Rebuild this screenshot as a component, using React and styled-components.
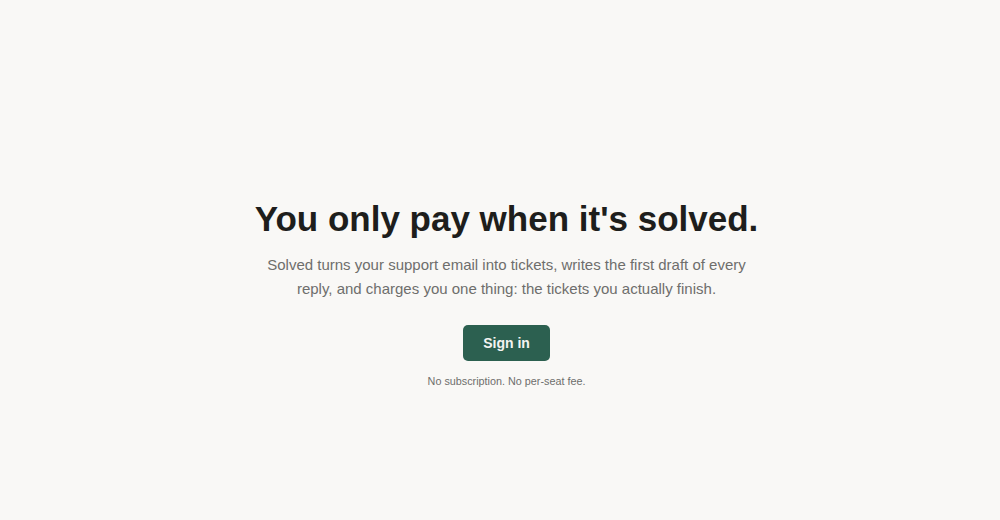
import React from "react";
import styled, { createGlobalStyle } from "styled-components";

const Global = createGlobalStyle`
  html, body { margin: 0; padding: 0; background: #f9f8f6; }
  body { font-family: "Liberation Sans", Arial, sans-serif; }
`;

const Page = styled.main`
  min-height: 520px;
  box-sizing: border-box;
  padding: 198px 0 0 13px;
  display: flex;
  flex-direction: column;
  align-items: center;
  text-align: center;
`;

const Title = styled.h1`
  margin: 0 0 13px;
  font-size: 35px;
  line-height: 42px;
  font-weight: 700;
  color: #1e1e1c;
`;

const Lead = styled.p`
  margin: 0 0 24px;
  max-width: 490px;
  font-size: 15px;
  line-height: 24px;
  color: #6e6e6c;
`;

const Button = styled.button`
  height: 36px;
  padding: 0 20px;
  border: none;
  border-radius: 5px;
  background: #2c6050;
  color: #f4f4f2;
  font-family: inherit;
  font-size: 14px;
  font-weight: 700;
  cursor: pointer;
`;

const Note = styled.p`
  margin: 13px 0 0;
  font-size: 10.8px;
  line-height: 14px;
  color: #6e6e6c;
`;

export default function App() {
  return (
    <>
      <Global />
      <Page>
        <Title>You only pay when it's solved.</Title>
        <Lead>
          Solved turns your support email into tickets, writes the first draft
          of every reply, and charges you one thing: the tickets you actually
          finish.
        </Lead>
        <Button>Sign in</Button>
        <Note>No subscription. No per-seat fee.</Note>
      </Page>
    </>
  );
}
